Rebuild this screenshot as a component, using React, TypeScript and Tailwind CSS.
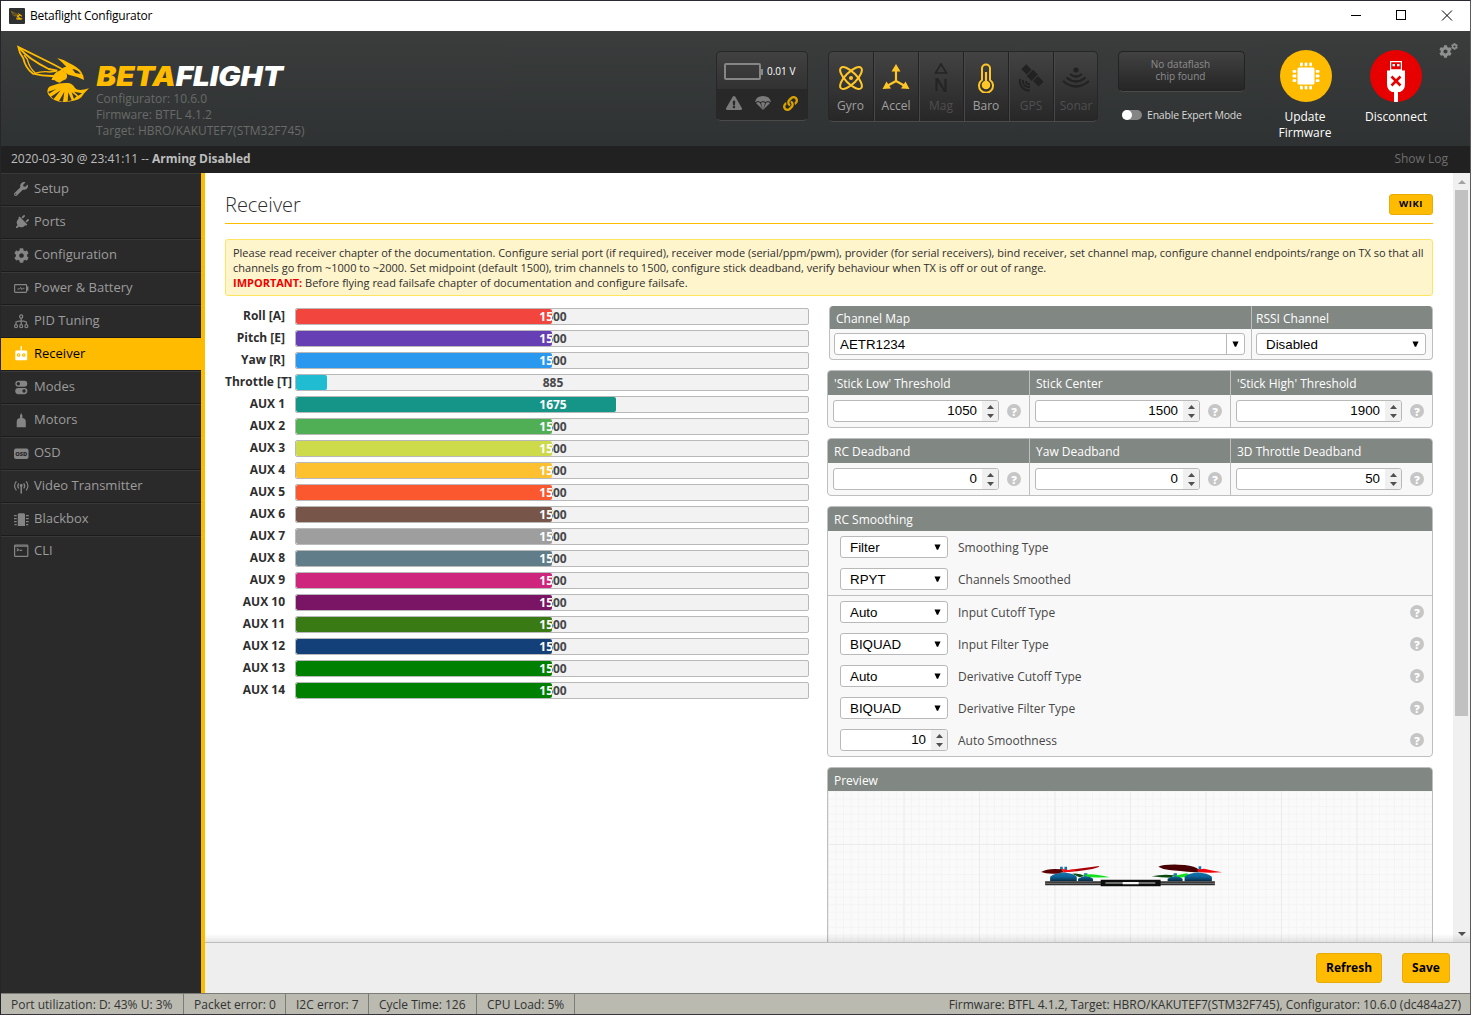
import React from "react";
import { FaWrench, FaPlug, FaCog, FaExclamationTriangle, FaLink } from "react-icons/fa";

const channels: [string, number, string][] = [
  ["Roll [A]", 1500, "#f1453d"],
  ["Pitch [E]", 1500, "#673fb4"],
  ["Yaw [R]", 1500, "#2b98f0"],
  ["Throttle [T]", 885, "#1fbcd2"],
  ["AUX 1", 1675, "#159588"],
  ["AUX 2", 1500, "#50ae55"],
  ["AUX 3", 1500, "#cdda49"],
  ["AUX 4", 1500, "#fdc02f"],
  ["AUX 5", 1500, "#fc5830"],
  ["AUX 6", 1500, "#785549"],
  ["AUX 7", 1500, "#9e9e9e"],
  ["AUX 8", 1500, "#617d8a"],
  ["AUX 9", 1500, "#cf267d"],
  ["AUX 10", 1500, "#7a1464"],
  ["AUX 11", 1500, "#3a7a14"],
  ["AUX 12", 1500, "#14407a"],
  ["AUX 13", 1500, "#008000"],
  ["AUX 14", 1500, "#008000"],
];

function ChannelBar({ label, value, color }: { label: string; value: number; color: string }) {
  const pct = `${((value - 800) / 1400) * 100}%`;
  return (
    <div className="flex h-[22px] items-start">
      <div className="w-[60px] shrink-0 whitespace-nowrap text-right text-[12px] font-bold leading-[16px] text-[#2e2e2e]">{label}</div>
      <div className="relative ml-[10px] h-[17px] w-[514px] overflow-hidden rounded-[2px] border border-[#b9b9b9] bg-[#f2f2f2]">
        <div className="w-[514px] text-center text-[12px] font-bold leading-[15px] text-[#474747]">{value}</div>
        <div className="absolute inset-y-0 left-0 overflow-hidden rounded-[2px]" style={{ width: pct, backgroundColor: color }}>
          <div className="w-[514px] text-center text-[12px] font-bold leading-[15px] text-white">{value}</div>
        </div>
      </div>
    </div>
  );
}

function Bee({ className }: { className?: string }) {
  return (
    <svg viewBox="48 135 222 174" className={className} fill="#ffbb00">
      <g fill="none" stroke="#ffbb00" strokeWidth="5.500" strokeLinejoin="miter">
        <path d="M186 207 L158 192 L55 141 L60 159 L70 175 Q76 204 99 221 Q128 229 162 228" />
        <path d="M60 146 Q84 176 146 207 L172 212" />
        <path d="M72 165 L82 178 Q88 204 106 219" strokeWidth="4" />
        <path d="M104 220 Q126 213 150 216 L170 213" strokeWidth="4" />
      </g>
      <path d="M171 174 Q192 178 207 189 Q234 201 244 216 Q251 226 252 240 Q233 229 217 227 Q205 226 196 219 Q190 212 180 213 Q185 202 199 200 Q186 186 171 174 Z" />
      <path d="M217 207 Q233 208 242 222 L226 219 Z" fill="#343735" />
      <path d="M161 226 Q166 216 181 211 Q195 214 201 224 Q203 237 192 240 Q185 244 179 248 Q169 247 164 241 L154 239 Z" />
      <path d="M143 268 Q145 259 160 256 Q179 248 201 249 Q216 248 225 264 Q233 275 267 265 Q252 279 244 292 Q229 305 193 306 Q160 306 145 284 Q140 276 143 268 Z" />
      <path d="M145 275 L169 267 L147 281 Z M153 290 L182 271 L161 297 Z M177 303 L193 275 L189 305 Z M203 304 L205 277 L215 301 Z M222 297 L215 277 L230 289 Z M235 287 L222 275 L246 280 Z" fill="#343735" />
    </svg>
  );
}

function GyroIcon() {
  return (
    <svg viewBox="0 0 24 24" className="size-[26px]" fill="none" stroke="#ffc627" strokeWidth="1.9">
      <ellipse cx="12" cy="12" rx="13.2" ry="5.2" transform="rotate(45 12 12)" />
      <ellipse cx="12" cy="12" rx="13.2" ry="5.2" transform="rotate(-45 12 12)" />
      <circle cx="12" cy="12" r="1.9" fill="#ffc627" stroke="none" />
    </svg>
  );
}
function AccelIcon() {
  return (
    <svg viewBox="0 0 28 28" className="size-[28px]" fill="#ffc627" stroke="#ffc627">
      <path d="M14 6v11L5 22M14 17l9 5" fill="none" strokeWidth="2.200" />
      <path stroke="none" d="M14 0l4.500 7.500h-9zM.5 25l4-7.500 4.500 7zM27.500 25l-4-7.500-4.500 7z" />
    </svg>
  );
}
function MagIcon() {
  return (
    <svg viewBox="0 0 28 32" className="h-[32px] w-[28px]" fill="none" stroke="#242424">
      <path d="M14 2l5.500 9h-11z" strokeWidth="1.6" />
      <path d="M9.500 29V17h1l7 12h1V17" strokeWidth="2.200" />
    </svg>
  );
}
function BaroIcon() {
  return (
    <svg viewBox="0 0 18 30" className="h-[30px] w-[18px]" fill="none" stroke="#ffc627" strokeWidth="2">
      <path d="M5 17V5.500a4 4 0 0 1 8 0V17a7 7 0 1 1-8 0z" />
      <circle cx="9" cy="22" r="4.300" fill="#ffc627" stroke="none" />
      <path d="M9 9v13" strokeWidth="2.200" />
    </svg>
  );
}
function GpsIcon() {
  return (
    <svg viewBox="0 0 28 28" className="size-[28px]" fill="#222">
      <g transform="rotate(45 16 12)">
        <rect x="3" y="8.500" width="7.500" height="7" />
        <rect x="11.500" y="7.500" width="7" height="9" />
        <rect x="19.500" y="8.500" width="8" height="7" />
      </g>
      <path d="M6 16a6 6 0 0 0 7 7M3 15a9.500 9.500 0 0 0 10 11.500M9 17a3 3 0 0 0 4 3" fill="none" stroke="#222" strokeWidth="2" />
    </svg>
  );
}
function SonarIcon() {
  return (
    <svg viewBox="0 0 28 24" className="h-[24px] w-[28px]" fill="none" stroke="#222" strokeWidth="2.200">
      <circle cx="14" cy="4" r="2.600" fill="#222" stroke="none" />
      <path d="M8 8q6 5 12 0M4.500 11.500q9.500 8 19 0M1 15q13 11 26 0" />
    </svg>
  );
}

const sensors: [string, boolean, () => React.JSX.Element][] = [
  ["Gyro", true, GyroIcon],
  ["Accel", true, AccelIcon],
  ["Mag", false, MagIcon],
  ["Baro", true, BaroIcon],
  ["GPS", false, GpsIcon],
  ["Sonar", false, SonarIcon],
];

const Svg = ({ children }: { children: React.ReactNode }) => (
  <svg viewBox="0 0 15 15" className="size-[15px] overflow-visible" fill="currentColor">{children}</svg>
);

const tabs: [string, React.ReactNode][] = [
  ["Setup", <FaWrench className="size-[14px]" />],
  ["Ports", <FaPlug className="size-[15px] rotate-45" />],
  ["Configuration", <FaCog className="size-[15px]" />],
  ["Power & Battery", (
    <Svg><rect x="0.600" y="3.600" width="12" height="7.800" rx="0.800" fill="none" stroke="currentColor" strokeWidth="1.200" /><rect x="12.800" y="5.500" width="1.600" height="4" /><path d="M3.500 8h2l1.200-1.600 1.200 2.200L9 7.300h1.400" fill="none" stroke="currentColor" /></Svg>
  )],
  ["PID Tuning", (
    <Svg><g fill="none" stroke="currentColor" strokeWidth="1.200"><circle cx="7.200" cy="2.500" r="1.600" /><circle cx="2" cy="12.200" r="1.500" /><circle cx="7.200" cy="12.200" r="1.500" /><circle cx="12.400" cy="12.200" r="1.500" /><path d="M7.200 4v6.500M2 10.500V8q5-2.200 10.400 0v2.500" /></g></Svg>
  )],
  ["Receiver", (
    <Svg><path fillRule="evenodd" d="M6.600 0h1.200v4.500H12q1.200 0 1.200 1.200V13q0 1.200-1.200 1.200H2.600Q1.300 14.200 1.300 13V5.700q0-1.200 1.300-1.200h4zM4.600 7.200a1.800 1.800 0 1 0 .1 0zM9.700 7.200a1.800 1.800 0 1 0 .1 0zM4 8.500h1.200v1H4zM9.200 8.500h1.200v1H9.200z" /></Svg>
  )],
  ["Modes", (
    <Svg><path fillRule="evenodd" d="M4.300.8h6a3 3 0 0 1 0 6h-6a3 3 0 0 1 0-6zM4.300 2a1.700 1.700 0 1 0 .1 0zM4.300 8h6a3 3 0 0 1 0 6.200h-6a3 3 0 0 1 0-6.200zM10 9.300a1.700 1.700 0 1 0 .1 0z" /></Svg>
  )],
  ["Motors", (
    <Svg><path d="M7.200 0l1.200 2.500v2.800h1.400q2 .8 2 3v6H2.700v-6q0-2.200 2-3H6V2.500z" /></Svg>
  )],
  ["OSD", (
    <Svg><rect x="0" y="2.500" width="14.500" height="10.500" rx="2" /><text x="7.250" y="9.800" textAnchor="middle" fontFamily="Open Sans" fontWeight="800" fontSize="5.800" fill="#2a2a2a">OSD</text></Svg>
  )],
  ["Video Transmitter", (
    <Svg><g fill="none" stroke="currentColor" strokeWidth="1.200"><path d="M4.800 4.300q-2 2.700 0 5.200M9.700 4.300q2 2.700 0 5.200M2.400 2.300q-3.600 4.500 0 9M12.100 2.300q3.600 4.500 0 9" /><path d="M7.250 7v7.500" strokeWidth="1.500" /></g><circle cx="7.250" cy="6.500" r="1.400" /></Svg>
  )],
  ["Blackbox", (
    <Svg><path d="M4.700 1.300H10L11 2.300V14H3.800V2.300zM0 3h2.700v1.300H0zM0 6h2.700v1.300H0zM0 9h2.700v1.300H0zM.5 12h2.200v1.300H.5zM12 3h2.700v1.300H12zM12 6h2.700v1.300H12zM12 9h2.700v1.300H12zM12 12h2.200v1.300H12z" /></Svg>
  )],
  ["CLI", (
    <Svg><rect x="0.600" y="1.200" width="13.200" height="11.200" rx="0.600" fill="none" stroke="currentColor" strokeWidth="1.200" /><path d="M.6 2.200h13M2.800 4.400l1.800 1.300-1.800 1.300M5.600 6.400h2.600" fill="none" stroke="currentColor" strokeWidth="1.100" /></Svg>
  )],
];

const Help = () => (
  <div className="flex size-[14px] shrink-0 items-center justify-center rounded-full bg-[#c6c6c6] text-[11px] font-extrabold leading-none text-white">?</div>
);

const Down = ({ className = "" }: { className?: string }) => (
  <svg viewBox="0 0 8 6" className={`h-[6px] w-[7px] ${className}`}><path d="M0.500 0h7L4.700 6H3.300z" fill="#000" /></svg>
);

function Select({ value, className }: { value: string; className: string }) {
  return (
    <div className={`flex h-[22px] items-center justify-between rounded-[3px] border border-[#b9b9b9] bg-white pl-[9px] pr-[6px] font-['Liberation_Sans'] text-[13.333px] text-black ${className}`}>
      <span className="pt-[2px] leading-[20px]">{value}</span>
      <Down />
    </div>
  );
}

function NumberInput({ value, className }: { value: number; className: string }) {
  return (
    <div className={`flex h-[22px] items-stretch justify-end overflow-hidden rounded-[3px] border border-[#b9b9b9] bg-white font-['Liberation_Sans'] text-[13.333px] text-black ${className}`}>
      <span className="pr-[5px] leading-[19px]">{value}</span>
      <div className="flex w-[16px] flex-col items-center justify-center gap-[5px] bg-[#f0f0f0]">
        <svg viewBox="0 0 7 4" className="h-[4px] w-[7px]"><path d="M0 4L3.500 0 7 4z" fill="#505050" /></svg>
        <svg viewBox="0 0 7 4" className="h-[4px] w-[7px]"><path d="M0 0L3.500 4 7 0z" fill="#505050" /></svg>
      </div>
    </div>
  );
}

function TripleBox({ items }: { items: [string, number][] }) {
  return (
    <div className="grid h-[58px] w-[606px] grid-cols-[201px_201px_1fr] overflow-hidden rounded-[4px] border border-[#bfbfbf] bg-[#f8f8f8]">
      {items.map(([t, v], i) => (
        <div key={t} className={i > 0 ? "border-l border-[#bfbfbf]" : ""}>
          <div className="h-[24px] bg-[#818783] pl-[6px] text-[12px] leading-[26px] text-white">{t}</div>
          <div className="flex h-[32px] items-center gap-[8px] pl-[5px]">
            <NumberInput value={v} className={i === 1 ? "w-[165px]" : "w-[166px]"} />
            <Help />
          </div>
        </div>
      ))}
    </div>
  );
}

const smoothing: [string, string, boolean][] = [
  ["Filter", "Smoothing Type", false],
  ["RPYT", "Channels Smoothed", false],
  ["Auto", "Input Cutoff Type", true],
  ["BIQUAD", "Input Filter Type", true],
  ["Auto", "Derivative Cutoff Type", true],
  ["BIQUAD", "Derivative Filter Type", true],
];

function Drone() {
  return (
    <svg viewBox="120 250 552 70" className="h-[23.300px] w-[184px]">
      <defs>
        <linearGradient id="dome" x1="0" x2="0" y1="0" y2="1"><stop offset="0" stopColor="#1673ad" /><stop offset=".5" stopColor="#0d6398" /><stop offset="1" stopColor="#08283f" /></linearGradient>
      </defs>
      <path d="M180 258h8v10h-8zM193 258h8v10h-8zM596 257h8v10h-8zM252 278h10v10h-10zM521 278h10v10h-10z" fill="#1673ad" />
      <path d="M216 279q22-3 38 7l-16 4z" fill="#0b4a10" />
      <path d="M248 282l24-1q35 3 56 9-36 1-60 0z" fill="#12e01c" />
      <path d="M455 287q35-8 68-3l-10 7q-30 0-58-4z" fill="#0b4a10" />
      <path d="M520 286l40-8q10 2 4 9l-22 4z" fill="#12e01c" />
      <path d="M150 302v-14q14-10 40-13 28 3 40 13v14zM554 302v-14q14-10 40-13 28 3 42 13v14zM234 302v-8q10-6 23-7 14 1 22 7v8zM503 302v-8q10-6 23-7 14 1 22 7v8z" fill="url(#dome)" />
      <path d="M123 274q20-12 60-8l8 8-22 5q-30 2-46-5z" fill="#5c0003" />
      <path d="M185 266l14 3 98-13q4 3-20 9-50 8-84 10z" fill="#a90008" /><path d="M182 264l22 4 24-2-4 5-32 4z" fill="#ff1010" />
      <path d="M475 258q14-7 60-6 40 1 55 10l14 10-18 3q-50-4-78-7-20-2-33-10z" fill="#4a0003" />
      <path d="M590 267l22-3q30 6 55 11-38 3-67 0z" fill="#f3060b" />
      <path d="M135 302h510v12H135z" fill="#2e2e2e" /><path d="M135 306h510v4H135z" fill="#686868" />
      <path d="M302 297h180v20H302z" fill="#0d0d0d" /><path d="M316 304h150v6H316z" fill="#6d726c" /><path d="M368 304h48v7h-48z" fill="#f4f4f4" />
    </svg>
  );
}

export default function App() {
  return (
    <div className="flex h-[1015px] w-[1471px] flex-col overflow-hidden border border-l-[#25252b] border-t-[#2b2932] border-r-[#5c5c5c] border-b-[#38343c] bg-[#2a2a2a] font-['Open_Sans',sans-serif] text-[#2e2e2e]">
      {/* Window title bar */}
      <div className="flex h-[30px] shrink-0 items-center bg-white pb-[1px] pl-[8px]">
        <div className="flex size-[16px] items-center justify-center rounded-[1px] bg-[#2f3130]"><Bee className="w-[12px]" /></div>
        <span className="ml-[5px] pt-[1px] text-[12px] tracking-[-0.250px] text-black">Betaflight Configurator</span>
        <svg viewBox="0 0 102 11" className="ml-auto mr-[17px] h-[11px] w-[102px]" fill="none" stroke="#000">
          <path d="M0 5.500h10" />
          <rect x="45.500" y="0.500" width="9" height="9" />
          <path d="M91 .5l10 10M101 .5l-10 10" />
        </svg>
      </div>

      {/* Header */}
      <div className="flex h-[115px] shrink-0 items-start bg-linear-to-b from-[#3a3d3c] to-[#2f3232]">
        <Bee className="ml-[15px] mt-[14px] h-[58px] w-[74px]" />
        <div className="ml-[6px] mt-[30px] w-[215px] text-[12px] leading-[16px] text-[#686b69]">
          <svg viewBox="0 0 190 30" className="h-[30px] w-[190px]" fontFamily="Inter" fontWeight="900" fontStyle="italic" fontSize="27.500">
            <text x="0.500" y="24.500" textLength="186.500" lengthAdjust="spacingAndGlyphs" fill="#fff"><tspan fill="#ffbb00">BETA</tspan>FLIGHT</text>
          </svg>
          <div className="whitespace-nowrap">Configurator: 10.6.0</div>
          <div className="whitespace-nowrap">Firmware: BTFL 4.1.2</div>
          <div className="whitespace-nowrap">Target: HBRO/KAKUTEF7(STM32F745)</div>
        </div>

        <div className="ml-[405px] mt-[20px] flex h-[70px] w-[92px] flex-col overflow-hidden rounded-[5px] border border-[#272727] border-b-[#4a4a4a] bg-[#282828]">
          <div className="flex h-[37px] items-center bg-linear-to-b from-[#414141] to-[#323232] pl-[7px] pt-[2px]">
            <div className="h-[17px] w-[37px] rounded-[2px] border-2 border-[#868686]" />
            <div className="h-[6px] w-[2px] bg-[#868686]" />
            <span className="ml-[4px] whitespace-nowrap text-[10px] text-white">0.01 V</span>
          </div>
          <div className="flex flex-1 items-center justify-between px-[9px] pb-[3px] text-[#7a7a7a]">
            <FaExclamationTriangle className="size-[16px]" />
            <svg viewBox="0 0 16 14" className="h-[14px] w-[16px]" fill="currentColor"><path d="M0 6Q1 0 8 0t8 6l-3-1-2.500 1L8 5 5.500 6 3 5zM1 7l2-1 2 1 3 7zM6 7l2-1 2 1-2 7zM15 7l-2-1-2 1-3 7z" /></svg>
            <FaLink className="size-[15px] text-[#d9a200]" />
          </div>
        </div>

        <div className="ml-[20px] mt-[20px] flex h-[71px] w-[270px] overflow-hidden rounded-[5px] border border-[#272727] border-b-[#4a4a4a] bg-linear-to-b from-[#434343] to-[#272727]">
          {sensors.map(([name, on, Icon], i) => (
            <div key={name} className={`flex w-[45px] shrink-0 flex-col items-center ${i > 0 ? "border-l border-[#222] shadow-[inset_1px_0_0_#484848]" : "-ml-[1px]"}`}>
              <div className="flex h-[51px] items-center"><Icon /></div>
              <div className={`-mt-[5px] text-[12px] leading-[16px] ${on ? "text-[#a0a0a0]" : "text-[#4f4f4f]"}`}>{name}</div>
            </div>
          ))}
        </div>

        <div className="ml-[20px] mt-[20px] w-[127px]">
          <div className="flex h-[41px] flex-col items-center justify-center rounded-[5px] border border-[#222] border-b-[#4a4a4a] bg-linear-to-b from-[#424242] to-[#252525] pb-[3px] pr-[2px] text-[10px] leading-[12px] text-[#8d8d8d]">
            <span>No dataflash</span>
            <span>chip found</span>
          </div>
          <div className="mt-[15px] flex items-center pl-[4px]">
            <div className="h-[10px] w-[20px] rounded-full bg-[#858585]"><div className="size-[10px] rounded-full bg-white" /></div>
            <span className="ml-[5px] whitespace-nowrap text-[10.500px] leading-[16px] tracking-[-0.200px] text-[#d8d8d8]">Enable Expert Mode</span>
          </div>
        </div>

        <div className="ml-[20px] mt-[19px] flex w-[80px] flex-col items-center text-center text-[12px] leading-[16px] text-white">
          <div className="ml-[1px] flex size-[52px] items-center justify-center rounded-full bg-[#ffbb00]">
            <svg viewBox="0 0 28 28" className="size-[28px]" fill="#fff">
              <rect x="5.500" y="5.500" width="17" height="17" rx="1.500" />
              {[8, 12.600, 17.200].map((p) => (
                <g key={p}><rect x={p} y="0.500" width="2.800" height="3.800" rx="1" /><rect x={p} y="23.700" width="2.800" height="3.800" rx="1" /><rect y={p} x="0.500" height="2.800" width="3.800" rx="1" /><rect y={p} x="23.700" height="2.800" width="3.800" rx="1" /></g>
              ))}
            </svg>
          </div>
          <span className="mt-[7px]">Update<br />Firmware</span>
        </div>
        <div className="ml-[11px] mt-[19px] flex w-[80px] flex-col items-center text-center text-[12px] leading-[16px] text-white">
          <div className="flex size-[52px] items-end justify-center overflow-hidden rounded-full bg-[#e60000]">
            <svg viewBox="0 0 18 41" className="h-[41px] w-[18px]" fill="#fff">
              <path fillRule="evenodd" d="M3 0h12v9.500H3zM4.200 1.200v7h9.600v-7zM5.500 3h2.500v2.200H5.500zM10 3h2.500v2.200H10zM0 9.500h18V23q0 6-5 8h-2v10H7V31H5q-5-2-5-8z" />
              <path d="M4.500 15.500l9 9M13.500 15.500l-9 9" stroke="#e60000" strokeWidth="2.600" />
            </svg>
          </div>
          <span className="mt-[7px]">Disconnect</span>
        </div>
        <div className="ml-[3px] mt-[12px] flex items-start text-[#8d908e]">
          <FaCog className="mt-[2px] size-[13px]" /><FaCog className="-ml-[1px] size-[7px]" />
        </div>
      </div>

      {/* Log line */}
      <div className="flex h-[27px] shrink-0 items-center justify-between bg-[#212121] pb-[2px] pl-[10px] pr-[22px] text-[12px] text-[#bdbdbd]">
        <span>2020-03-30 @ 23:41:11 -- <b>Arming Disabled</b></span>
        <span className="text-[#6e6e6e]">Show Log</span>
      </div>

      {/* Main */}
      <div className="flex h-[820px] shrink-0">
        <nav className="w-[204px] shrink-0 border-r-4 border-[#ffbb00] bg-[#2a2a2a] text-[13px]">
          {tabs.map(([name, icon]) =>
            name === "Receiver" ? (
              <div key={name} className="flex h-[33px] items-center border-b border-[#1d1d1d] bg-[#ffbb00] pb-[1px] pl-[13px] text-black"><span className="flex w-[20px] text-white">{icon}</span>{name}</div>
            ) : (
              <div key={name} className={`flex items-center border-t border-t-[#393939] pl-[13px] text-[#9c9c9c] ${name === "CLI" ? "h-[32px] pb-[3px]" : "h-[33px] border-b border-b-[#1b1b1b] pb-[1px]"}`}><span className="flex w-[20px] text-[#858585]">{icon}</span>{name}</div>
            )
          )}
        </nav>

        <div className="flex min-w-0 flex-1 flex-col">
          <div className="relative flex h-[769px] bg-white">
            <div className="h-full w-[1248px] overflow-hidden pl-[20px]">
              <div className="flex h-[51px] w-[1208px] items-center justify-between border-b border-[#ffbb00] pt-[12px]">
                <h1 className="pt-[2px] text-[20px] font-light leading-[26px]">Receiver</h1>
                <div className="flex h-[21px] w-[44px] items-center justify-center rounded-[3px] border border-[#e8ac08] bg-[#ffbb00] text-[9.500px] font-bold tracking-[0.500px] text-black">WIKI</div>
              </div>
              <div className="mt-[15px] h-[57px] w-[1208px] whitespace-nowrap rounded-[3px] border border-[#ffe55f] bg-[#fff5cc] pl-[7px] pt-[5px] text-[11px] leading-[15px]">
                <div className="tracking-[-0.012px]">Please read receiver chapter of the documentation. Configure serial port (if required), receiver mode (serial/ppm/pwm), provider (for serial receivers), bind receiver, set channel map, configure channel endpoints/range on TX so that all</div>
                <div>channels go from ~1000 to ~2000. Set midpoint (default 1500), trim channels to 1500, configure stick deadband, verify behaviour when TX is off or out of range.</div>
                <div className="tracking-[-0.012px]"><b className="text-[#f00000]">IMPORTANT:</b> Before flying read failsafe chapter of documentation and configure failsafe.</div>
              </div>
              <div className="flex w-[1208px] justify-between">
                <div className="mt-[12px]">
                  {channels.map(([l, v, c]) => <ChannelBar key={l} label={l} value={v} color={c} />)}
                </div>
                <div className="mt-[10px] flex w-[606px] flex-col gap-[10px]">
                  <div className="ml-[2px] flex h-[54px] overflow-hidden rounded-[4px] border border-t-0 border-[#bfbfbf] bg-[#f8f8f8]">
                    <div className="w-[421px]">
                      <div className="h-[23px] bg-[#818783] pl-[6px] text-[12px] leading-[26px] text-white">Channel Map</div>
                      <div className="ml-[4px] mt-[4px] flex h-[22px] w-[411px] items-center rounded-[3px] border border-[#b9b9b9] bg-white pl-[5px] font-['Liberation_Sans'] text-[13.333px] text-black">
                        <span className="flex-1 pt-[2px] leading-[20px]">AETR1234</span>
                        <div className="flex h-full w-[18px] items-center justify-center border-l border-[#b9b9b9]"><Down /></div>
                      </div>
                    </div>
                    <div className="flex-1 border-l border-[#bfbfbf]">
                      <div className="h-[23px] bg-[#818783] pl-[4px] text-[12px] leading-[26px] text-white">RSSI Channel</div>
                      <Select value="Disabled" className="ml-[4px] mt-[4px] w-[170px]" />
                    </div>
                  </div>
                  <TripleBox items={[["'Stick Low' Threshold", 1050], ["Stick Center", 1500], ["'Stick High' Threshold", 1900]]} />
                  <TripleBox items={[["RC Deadband", 0], ["Yaw Deadband", 0], ["3D Throttle Deadband", 50]]} />
                  <div className="overflow-hidden rounded-[4px] border border-[#bfbfbf] bg-[#f8f8f8] text-[12px]">
                    <div className="h-[24px] bg-[#818783] pl-[6px] leading-[26px] text-white">RC Smoothing</div>
                    {smoothing.map(([v, l, help], i) => (
                      <div key={l} className={`flex items-center pl-[12px] pr-[8px] ${i === 1 ? "h-[33px] border-b border-[#bfbfbf]" : "h-[32px]"}`}>
                        <Select value={v} className="w-[108px]" />
                        <span className="ml-[10px] flex-1 pt-[2px] text-[#474747]">{l}</span>
                        {help && <Help />}
                      </div>
                    ))}
                    <div className="flex h-[32px] items-center pl-[12px] pr-[8px]">
                      <NumberInput value={10} className="w-[108px]" />
                      <span className="ml-[10px] flex-1 pt-[2px] text-[#474747]">Auto Smoothness</span>
                      <Help />
                    </div>
                  </div>
                  <div className="h-[260px] overflow-hidden rounded-[4px] border border-[#bfbfbf] bg-[#fafafa]">
                    <div className="h-[23px] bg-[#818783] pl-[6px] text-[12px] leading-[26px] text-white">Preview</div>
                    <div className="h-full bg-[linear-gradient(90deg,#ececec_1px,transparent_1px),linear-gradient(#ececec_1px,transparent_1px),linear-gradient(90deg,#f4f4f4_1px,transparent_1px),linear-gradient(#f4f4f4_1px,transparent_1px)] bg-[length:75.500px_151px,151px_151px,7.550px_7.550px,7.550px_7.550px] bg-[position:0px_0px,0px_53px,0px_0px,0px_0px] pl-[212px] pt-[73px]">
                      <Drone />
                    </div>
                  </div>
                </div>
              </div>
            </div>
            <div className="flex w-[17px] flex-col items-center bg-[#f0f0f0]">
              <svg viewBox="0 0 8 4" className="mt-[7px] h-[4px] w-[8px]"><path d="M0 4l4-4 4 4z" fill="#a3a3a3" /></svg>
              <div className="mt-[6px] h-[526px] w-[13px] bg-[#c1c1c1]" />
              <svg viewBox="0 0 8 4" className="mb-[6px] mt-auto h-[4px] w-[8px]"><path d="M0 0l4 4 4-4z" fill="#505050" /></svg>
            </div>
            <div className="absolute inset-x-0 bottom-0 h-[8px] bg-linear-to-b from-transparent to-black/10" />
          </div>
          <div className="flex h-[51px] items-center justify-end gap-[20px] border-t border-[#bdbdbd] bg-[#eee] pr-[20px] text-[12px] font-bold text-black">
            <div className="flex h-[30px] w-[66px] items-center justify-center rounded-[3px] border border-[#e8ac08] bg-[#ffbb00]">Refresh</div>
            <div className="flex h-[30px] w-[48px] items-center justify-center rounded-[3px] border border-[#e8ac08] bg-[#ffbb00]">Save</div>
          </div>
        </div>
      </div>

      {/* Status bar */}
      <div className="flex h-[21px] shrink-0 items-stretch whitespace-nowrap border-t border-[#7b7b77] bg-[#babab0] text-[12px] leading-[21px] text-[#333]">
        <div className="w-[183px] border-r border-[#7b7b77] pl-[10px]">Port utilization: D: 43% U: 3%</div>
        <div className="w-[102px] border-r border-[#7b7b77] pl-[10px]">Packet error: 0</div>
        <div className="w-[83px] border-r border-[#7b7b77] pl-[10px]">I2C error: 7</div>
        <div className="w-[108px] border-r border-[#7b7b77] pl-[10px]">Cycle Time: 126</div>
        <div className="w-[98px] border-r border-[#7b7b77] pl-[10px]">CPU Load: 5%</div>
        <div className="flex-1 pr-[9px] text-right">Firmware: BTFL 4.1.2, Target: HBRO/KAKUTEF7(STM32F745), Configurator: 10.6.0 (dc484a27)</div>
      </div>
    </div>
  );
}
